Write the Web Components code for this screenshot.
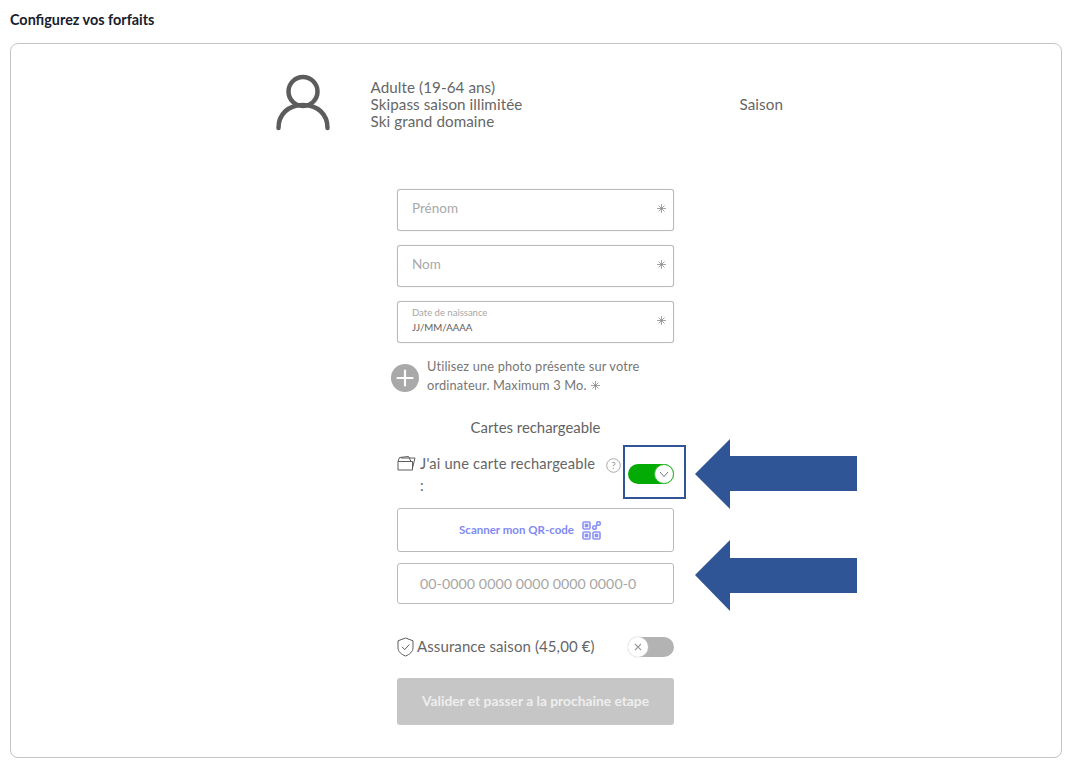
<!DOCTYPE html>
<html lang="fr"><head><meta charset="utf-8"><title>Forfaits</title>
<style>
html,body{margin:0;background:#fff}
body{font-family:Lato,"Noto Sans",sans-serif;color:#5a5a5a}
</style></head><body>
<x-page></x-page>
<script>
const FONT='Lato,"Noto Sans",sans-serif';
class XField extends HTMLElement{
  connectedCallback(){
    const s=this.attachShadow({mode:'open'});
    const small=this.getAttribute('small');
    s.innerHTML=`<style>
    :host{display:flex;box-sizing:border-box;width:277px;height:42px;border:1px solid #b9b9b9;border-radius:3px;align-items:center;justify-content:space-between;padding:0 7px 0 14px;background:#fff;box-shadow:0 0 1px #ccc}
    .ph{font-size:13.5px;color:#a8a8a8;position:relative;top:-2px}
    .st{display:flex;flex-direction:column}
    .sm{font-size:9.5px;line-height:11px;color:#a6a6a6;margin-top:-3px}
    .v{font-size:9.700px;line-height:13px;color:#5c5c5c;margin-top:3px}
    x-star{position:relative;top:-2px}
    </style>${small?`<div class="st"><span class="sm">${small}</span><span class="v">${this.getAttribute('value')}</span></div>`:`<span class="ph">${this.getAttribute('label')}</span>`}<x-star></x-star>`;
  }
}
class XStar extends HTMLElement{
  constructor(){super();this.attachShadow({mode:'open'}).innerHTML=`<style>:host{display:inline-block;width:9px;height:9px;line-height:0}</style>
  <svg width="9" height="9" viewBox="0 0 9 9" fill="none" stroke="#8a8a8a" stroke-width=".8"><path d="M4.500 0v9M0 4.500h9M1.500 1.500l6 6M7.500 1.500l-6 6"/></svg>`}
}
class XToggle extends HTMLElement{
  connectedCallback(){
    const on=this.hasAttribute('on');
    this.attachShadow({mode:'open'}).innerHTML=`<style>
    :host{display:block;width:46px;height:20px;border-radius:10px;box-sizing:border-box;background:${on?'#04ab04':'#b3b3b3'};position:relative;flex:none}
    .k{position:absolute;top:${on?1:0}px;${on?'right:0':'left:0'};width:${on?18:20}px;height:${on?18:20}px;border-radius:50%;background:#fff;display:flex;align-items:center;justify-content:center;${on?'border:1px solid #2fb92f;top:0;':'box-shadow:0 0 2px #ccc;'}}
    svg{display:block}
    </style><div class="k">${on?'<svg width="10" height="7" viewBox="0 0 10 7" fill="none" stroke="#777" stroke-width="1"><path d="M1 1l4 4.500L9 1"/></svg>':'<svg width="8" height="8" viewBox="0 0 8 8" fill="none" stroke="#9a9a9a" stroke-width="1.100"><path d="M1 1l6 6M7 1L1 7"/></svg>'}</div>`;
  }
}
class XProfile extends HTMLElement{
  constructor(){super();this.attachShadow({mode:'open'}).innerHTML=`<style>
  :host{display:grid;grid-template-columns:54px 152px auto;align-items:center;column-gap:41px;padding:33px 0 0 265px;font-size:15.200px;line-height:17px;letter-spacing:.08px;color:#666}
  svg{display:block;margin-top:-3px}
  .t{white-space:nowrap;width:152px;margin-left:-.5px}
  .s{margin-left:175.500px}
  </style>
  <svg width="54" height="58" viewBox="0 0 54 58" fill="none" stroke="#5c5c5c" stroke-width="4.500" stroke-linecap="round"><circle cx="27" cy="17.500" r="14.500"/><path d="M2.500 54c0-14 10-23 24.500-23s24.500 9 24.500 23"/></svg>
  <div class="t">Adulte (19-64 ans)<br>Skipass saison illimitée<br>Ski grand domaine</div>
  <div class="s">Saison</div>`}
}
class XPage extends HTMLElement{
  constructor(){super();this.attachShadow({mode:'open'}).innerHTML=`<style>
  :host{display:block;box-sizing:border-box;width:1076px;height:762px;padding:11px 15px 0 10px;font-family:${FONT};overflow:hidden}
  h1{margin:0 0 15px;font-size:14.400px;line-height:17px;font-weight:700;color:#17202c}
  .card{position:relative;box-sizing:border-box;width:1052px;height:715px;border:1px solid #c4c4c4;border-radius:8px;background:#fff}
  .form{width:277px;margin:57px auto 0 386px;display:flex;flex-direction:column}
  .stack{display:flex;flex-direction:column;gap:14px}
  .photo{display:flex;align-items:center;gap:8px;margin:14px 0 0 -6px;font-size:12.800px;line-height:19px;letter-spacing:.15px;color:#767676}
  .plus{width:28px;height:28px;border-radius:50%;background:#a9a9a9;flex:none;margin-top:3px;display:flex;align-items:center;justify-content:center}
  .photo x-star{margin-left:4px}
  h2{margin:23px 0 0;font-size:14.900px;line-height:18px;font-weight:400;text-align:center;color:#636363}
  .rech{display:flex;margin-top:16px;height:48px;font-size:14.700px;line-height:22px;color:#666}
  .rech .ic{margin-top:4px;flex:none}
  .rech .lab{width:178px;margin-left:4px;letter-spacing:.18px}
  .rech .q{margin:6px 0 0 10px;flex:none}
  .rech x-toggle{margin:12px 0 0 7px}
  .scan{box-sizing:border-box;height:44px;margin-top:8px;border:1px solid #b9b9b9;border-radius:3px;display:flex;align-items:center;justify-content:center;gap:8px;font-size:11.500px;font-weight:700;color:#7f8af2;padding:0 11px 2px 0}
  .scan svg{position:relative;top:1px}
  .code{box-sizing:border-box;height:41px;margin-top:11px;border:1px solid #b9b9b9;border-radius:3px;display:flex;align-items:center;padding-left:22px;font-size:14.200px;letter-spacing:.07px;color:#a6a6a6}
  .ass{display:flex;align-items:center;margin-top:32px;height:22px;font-size:15px;color:#666}
  .ass span{margin-left:3px;flex:1;letter-spacing:.1px;position:relative;top:-1px}
  .go{box-sizing:border-box;height:47px;margin-top:20px;padding-bottom:2px;border-radius:3px;background:#c6c6c6;color:#eee;font-size:13.800px;font-weight:700;display:flex;align-items:center;justify-content:center}
  .box{position:absolute;left:612px;top:401px;width:59px;height:50px;border:2px solid #2f5597}
  .arrow{position:absolute;left:684px;display:block}
  svg{display:block}
  </style>
  <h1>Configurez vos forfaits</h1>
  <div class="card">
    <x-profile></x-profile>
    <div class="form">
      <div class="stack">
        <x-field label="Prénom"></x-field>
        <x-field label="Nom"></x-field>
        <x-field small="Date de naissance" value="JJ/MM/AAAA"></x-field>
      </div>
      <div class="photo">
        <div class="plus"><svg width="18" height="18" viewBox="0 0 18 18" stroke="#fff" stroke-width="2.200" stroke-linecap="round"><path d="M9 1.500v15M1.500 9h15"/></svg></div>
        <div>Utilisez une photo présente sur votre<br>ordinateur. Maximum 3 Mo.<x-star></x-star></div>
      </div>
      <h2>Cartes rechargeable</h2>
      <div class="rech">
        <svg class="ic" width="19" height="15" viewBox="0 0 19 15" fill="none" stroke="#5d5d5d" stroke-width="1"><path d="M1 5.500h14.500v8.500H1zM1 5.500L2.500 1.500l9-1 2.500 5M4 2h14l-2.500 10"/></svg>
        <div class="lab">J'ai une carte rechargeable :</div>
        <svg class="q" width="15" height="15" viewBox="0 0 15 15"><circle cx="7.500" cy="7.500" r="6.800" fill="none" stroke="#aaa"/><text x="7.500" y="11" text-anchor="middle" font-size="10" fill="#999" font-family="Lato,sans-serif">?</text></svg>
        <x-toggle on></x-toggle>
      </div>
      <div class="scan">Scanner mon QR-code
        <svg width="19" height="19" viewBox="0 0 19 19" fill="none" stroke="#8a94f5" stroke-width="1.600"><rect x="1" y="1" width="7" height="7" rx="1"/><rect x="3.500" y="3.500" width="2" height="2" fill="#8a94f5"/><rect x="1" y="11" width="7" height="7" rx="1"/><rect x="3.500" y="13.500" width="2" height="2" fill="#8a94f5"/><rect x="11" y="11" width="7" height="7" rx="1"/><rect x="13.500" y="13.500" width="2" height="2" fill="#8a94f5"/><circle cx="12.500" cy="6.500" r="1.800"/><circle cx="16.500" cy="2.500" r="1.800"/><path d="M14 5l1.300-1.300"/></svg>
      </div>
      <div class="code">00-0000 0000 0000 0000 0000-0</div>
      <div class="ass">
        <svg width="17" height="20" viewBox="0 0 17 20" fill="none" stroke="#5d5d5d" stroke-width="1"><path d="M8.500 1L16 3.800v7c0 4-3.500 6.700-7.500 8.200C4.500 17.500 1 14.800 1 10.800v-7z"/><path d="M5 9.800l2.700 2.800L12.300 7.500"/></svg>
        <span>Assurance saison (45,00 €)</span>
        <x-toggle></x-toggle>
      </div>
      <div class="go">Valider et passer a la prochaine etape</div>
    </div>
    <div class="box"></div>
    <svg class="arrow" style="top:394px" width="162" height="72" viewBox="0 0 162 72"><path fill="#2f5597" d="M0 36L35 1v17h127v35H35v18z"/></svg>
    <svg class="arrow" style="top:495px" width="162" height="72" viewBox="0 0 162 72"><path fill="#2f5597" d="M0 36L35 1v18h127v35H35v18z"/></svg>
  </div>`}
}
customElements.define('x-star',XStar);
customElements.define('x-field',XField);
customElements.define('x-toggle',XToggle);
customElements.define('x-profile',XProfile);
customElements.define('x-page',XPage);
</script>
</body></html>
